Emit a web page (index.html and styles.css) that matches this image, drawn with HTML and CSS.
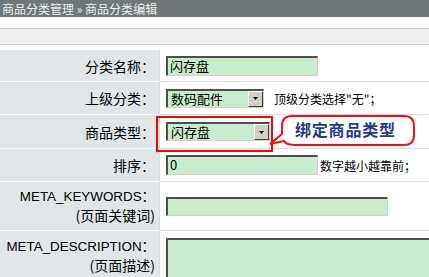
FILE: index.html
```html
<!DOCTYPE html>
<html>
<head>
<meta charset="utf-8">
<link rel="stylesheet" href="styles.css">
</head>
<body>
<div class="header">商品分类管理 » 商品分类编辑</div>
<div class="toolbar"></div>
<div class="form">
  <div class="row r1">
    <div class="label">分类名称：</div>
    <div class="value"><div class="input w151">闪存盘</div></div>
  </div>
  <div class="row r2">
    <div class="label">上级分类：</div>
    <div class="value">
      <div class="select w97"><span class="sel-text">数码配件</span><span class="sel-btn"><svg width="5" height="3" viewBox="0 0 5 3"><path d="M0 0H5L2.5 3Z" fill="#000"/></svg></span></div>
      <span class="note">顶级分类选择"无"；</span>
    </div>
  </div>
  <div class="row r3">
    <div class="label">商品类型：</div>
    <div class="value">
      <div class="select w104"><span class="sel-text">闪存盘</span><span class="sel-btn"><svg width="5" height="3" viewBox="0 0 5 3"><path d="M0 0H5L2.5 3Z" fill="#000"/></svg></span></div>
      <div class="redbox"></div>
      <div class="callout">
        <svg class="bubble" width="152" height="40" viewBox="0 0 152 40"><path d="M24 2H136Q146 2 146 12V21Q146 31 136 31H28Q18 31 16 27L2 30L14 20V12Q14 2 24 2Z" fill="#fff" stroke="#e8141c" stroke-width="2"/></svg>
        <span class="callout-text">绑定商品类型</span>
      </div>
    </div>
  </div>
  <div class="row r4">
    <div class="label">排序：</div>
    <div class="value"><div class="input w151">0</div><span class="note tight">数字越小越靠前；</span></div>
  </div>
  <div class="row r5">
    <div class="label two"><span class="lat">META_KEYWORDS：</span><span>(页面关键词)</span></div>
    <div class="value top"><div class="input w221 h18"></div></div>
  </div>
  <div class="row r6">
    <div class="label two top6"><span class="lat">META_DESCRIPTION：</span><span>(页面描述)</span></div>
    <div class="value top8"><div class="textarea"></div></div>
  </div>
</div>
</body>
</html>
```
FILE: styles.css
```css
html, body {
  margin: 0;
  padding: 0;
  background: #ffffff;
  overflow: hidden;
}
body {
  font-family: "Noto Sans CJK SC", "Liberation Sans", sans-serif;
  font-size: 13px;
  color: #000;
}
.header {
  height: 17px;
  line-height: 17px;
  background: #6f7778;
  color: #eef0f0;
  font-size: 12px;
  padding-left: 2px;
  white-space: nowrap;
}
.toolbar {
  margin-top: 11px;
  height: 15px;
  background: #eeeeee;
  border-top: 1px solid #cfcfcf;
  border-bottom: 1px solid #cfcfcf;
}
.form {
  margin-top: 5px;
}
.row {
  display: flex;
  box-sizing: border-box;
}
.r1 { height: 32px; }
.r2 { height: 33px; }
.r3 { height: 34px; }
.r4 { height: 33px; }
.r5 { height: 49px; }
.r6 { height: 50px; }
.label {
  width: 160px;
  flex: none;
  box-sizing: border-box;
  background: #e2e6e8;
  border-bottom: 1px solid #fbfbfb;
  border-right: 1px solid #d9dcde;
  text-align: right;
  padding-right: 4px;
  display: flex;
  align-items: center;
  justify-content: flex-end;
  white-space: nowrap;
  line-height: 18px;
  font-size: 14px;
}
.label.two {
  flex-direction: column;
  align-items: flex-end;
  justify-content: center;
}
.label.top6 {
  justify-content: flex-start;
  padding-top: 7px;
}
.lat {
  font-family: "Liberation Sans", "Noto Sans CJK SC", sans-serif;
  font-size: 13.4px;
}
.value {
  flex: 1;
  position: relative;
  box-sizing: border-box;
  border-bottom: 1px solid #dedede;
  padding-left: 6px;
  display: flex;
  align-items: center;
  white-space: nowrap;
}
.value.top8 {
  align-items: flex-start;
  padding-top: 7px;
}
.r6 .label, .r6 .value { border-bottom: none; }
.input {
  box-sizing: border-box;
  height: 20px;
  background: #c8eccd;
  border-top: 2px solid #4e4e4e;
  border-left: 2px solid #4e4e4e;
  border-right: 1px solid #d2d0c9;
  border-bottom: 1px solid #d2d0c9;
  padding-left: 2px;
  line-height: 16px;
  font-size: 13px;
}
.w151 { width: 152px; }
.w221 { width: 222px; }
.h18 { height: 19px; }
.textarea {
  box-sizing: border-box;
  width: 280px;
  height: 43px;
  background: #c8eccd;
  border-top: 2px solid #4e4e4e;
  border-left: 2px solid #4e4e4e;
}
.select {
  box-sizing: border-box;
  height: 19px;
  background: #c8eccd;
  border-top: 2px solid #4e4e4e;
  border-left: 2px solid #4e4e4e;
  border-right: 1px solid #d2d0c9;
  border-bottom: 1px solid #d2d0c9;
  display: flex;
  align-items: stretch;
}
.w97 { width: 98px; }
.w104 { width: 104px; }
.sel-text {
  flex: 1;
  padding-left: 3px;
  line-height: 16px;
  font-size: 13px;
}
.sel-btn {
  width: 15px;
  box-sizing: border-box;
  background: #d4d0c8;
  border-top: 1px solid #ffffff;
  border-left: 1px solid #ffffff;
  border-right: 1px solid #404040;
  border-bottom: 1px solid #404040;
  display: flex;
  align-items: center;
  justify-content: center;
}
.note {
  font-size: 12px;
  margin-left: 10px;
}
.note.tight { margin-left: 2px; }
.redbox {
  position: absolute;
  left: -4px;
  top: 1px;
  width: 117px;
  height: 36px;
  box-sizing: border-box;
  border: 2px solid #ff0000;
}
.callout {
  position: absolute;
  left: 108px;
  top: -1px;
  width: 152px;
  height: 40px;
}
.bubble {
  position: absolute;
  left: 0;
  top: 0;
}
.callout-text {
  position: absolute;
  left: 27px;
  top: 5px;
  font-size: 16px;
  font-weight: bold;
  letter-spacing: 0.8px;
  color: #1e3c8c;
  line-height: 20px;
}
```
